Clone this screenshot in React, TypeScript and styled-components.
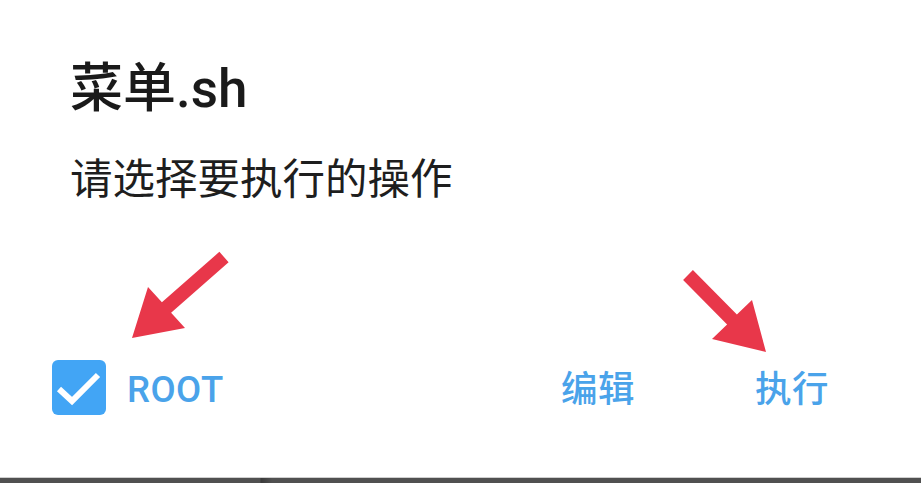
import React from "react";
import styled, { createGlobalStyle } from "styled-components";

const Global = createGlobalStyle`
  html, body { margin: 0; padding: 0; background: #ffffff; }
  body { font-family: Roboto, "Noto Sans CJK SC", sans-serif; }
`;

const Page = styled.div`
  position: relative;
  width: 921px;
  height: 483px;
  display: flex;
  flex-direction: column;
  background: #ffffff;
  overflow: hidden;
`;

const Dialog = styled.div`
  flex: 1;
  display: flex;
  flex-direction: column;
`;

const Title = styled.h1`
  margin: 58px 0 0 70px;
  font-family: Roboto, "Noto Sans CJK SC", sans-serif;
  font-size: 53px;
  font-weight: 500;
  line-height: 62px;
  color: #1a1a1a;
`;

const Message = styled.p`
  margin: 31px 0 0 70px;
  font-family: "Noto Sans CJK SC", Roboto, sans-serif;
  font-size: 42.5px;
  font-weight: 400;
  line-height: 50px;
  color: #1e1e1e;
`;

const Actions = styled.div`
  margin-top: auto;
  margin-bottom: 62px;
  display: flex;
  align-items: center;
  padding: 0 92px 0 52px;
`;

const CheckGroup = styled.label`
  display: flex;
  align-items: center;
  gap: 21px;
`;

const Box = styled.span`
  width: 54px;
  height: 55px;
  border-radius: 6px;
  background: #42a5f5;
  display: flex;
  margin-top: -4px;
`;

const ActionText = styled.span`
  font-family: Roboto, "Noto Sans CJK SC", sans-serif;
  font-size: 36.5px;
  font-weight: 500;
  line-height: 40px;
  color: #4aa3ea;
  letter-spacing: 0.5px;
`;

const Spacer = styled.div`
  flex: 1;
`;

const Buttons = styled.div`
  display: flex;
  align-items: center;
  gap: 120px;
`;

const BottomBar = styled.div`
  height: 5px;
  border-top: 1px solid #cfcfcf;
  background: linear-gradient(
    to right,
    #505050 0,
    #505050 260px,
    #3a3a3a 261px,
    #505050 272px,
    #505050 100%
  );
`;

const Overlay = styled.svg`
  position: absolute;
  left: 0;
  top: 0;
  width: 921px;
  height: 483px;
  pointer-events: none;
`;

export default function App() {
  return (
    <>
      <Global />
      <Page>
        <Dialog>
          <Title>菜单.sh</Title>
          <Message>请选择要执行的操作</Message>
          <Actions>
            <CheckGroup>
              <Box>
                <svg width="54" height="55" viewBox="0 0 54 55">
                  <path
                    d="M7 29 L20 41 L46 15"
                    fill="none"
                    stroke="#ffffff"
                    strokeWidth="6"
                    strokeLinecap="butt"
                    strokeLinejoin="miter"
                  />
                </svg>
              </Box>
              <ActionText>ROOT</ActionText>
            </CheckGroup>
            <Spacer />
            <Buttons>
              <ActionText>编辑</ActionText>
              <ActionText>执行</ActionText>
            </Buttons>
          </Actions>
        </Dialog>
        <BottomBar />
        <Overlay viewBox="0 0 921 483">
          <polygon
            points="219.4,251.8 228.6,262.3 171.1,312.8 185,328 132,338 148,287 161.9,302.3"
            fill="#e8374a"
          />
          <polygon
            points="692.9,270 736.9,314.5 752,300 766,352 712,339 727.1,324.5 683.1,280"
            fill="#e8374a"
          />
        </Overlay>
      </Page>
    </>
  );
}
